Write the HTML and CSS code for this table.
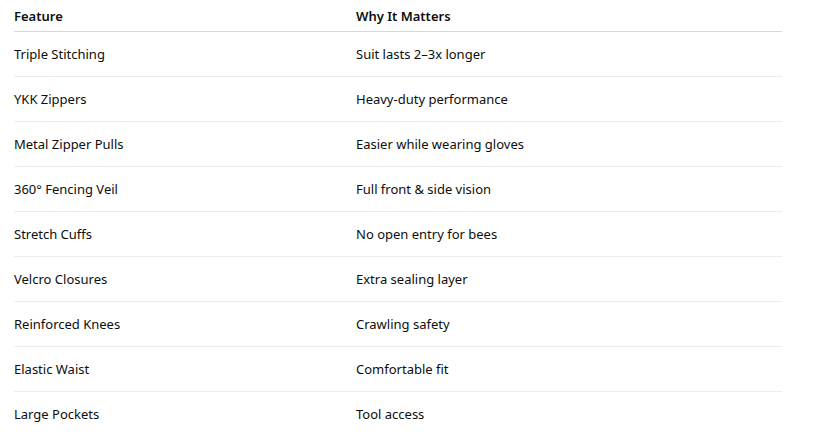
FILE: index.html
```html
<!DOCTYPE html>
<html>
<head>
<meta charset="utf-8">
<link rel="stylesheet" href="styles.css">
</head>
<body>
<table class="features">
  <thead>
    <tr><th class="c1">Feature</th><th class="c2">Why It Matters</th></tr>
  </thead>
  <tbody>
    <tr><td class="c1">Triple Stitching</td><td class="c2">Suit lasts 2–3x longer</td></tr>
    <tr><td class="c1">YKK Zippers</td><td class="c2">Heavy-duty performance</td></tr>
    <tr><td class="c1">Metal Zipper Pulls</td><td class="c2">Easier while wearing gloves</td></tr>
    <tr><td class="c1">360° Fencing Veil</td><td class="c2">Full front &amp; side vision</td></tr>
    <tr><td class="c1">Stretch Cuffs</td><td class="c2">No open entry for bees</td></tr>
    <tr><td class="c1">Velcro Closures</td><td class="c2">Extra sealing layer</td></tr>
    <tr><td class="c1">Reinforced Knees</td><td class="c2">Crawling safety</td></tr>
    <tr><td class="c1">Elastic Waist</td><td class="c2">Comfortable fit</td></tr>
    <tr><td class="c1">Large Pockets</td><td class="c2">Tool access</td></tr>
  </tbody>
</table>
</body>
</html>
```
FILE: styles.css
```css
html, body {
  margin: 0;
  padding: 0;
  background: #ffffff;
}
body {
  padding: 0 34px 0 14px;
  font-family: "Noto Sans", "Open Sans", sans-serif;
  font-size: 13px;
  color: #0d0d0d;
}
.features {
  width: 768px;
  border-collapse: collapse;
  table-layout: fixed;
}
.features th {
  text-align: left;
  font-weight: 600;
  height: 31px;
  padding: 0;
  vertical-align: middle;
  border-bottom: 1px solid #d6d6d6;
}
.features td {
  height: 44px;
  padding: 0;
  vertical-align: middle;
  border-bottom: 1px solid #ececec;
}
.features tbody tr:last-child td {
  border-bottom: none;
}
.c1 { width: 342px; }
.c2 { width: 426px; }
```
